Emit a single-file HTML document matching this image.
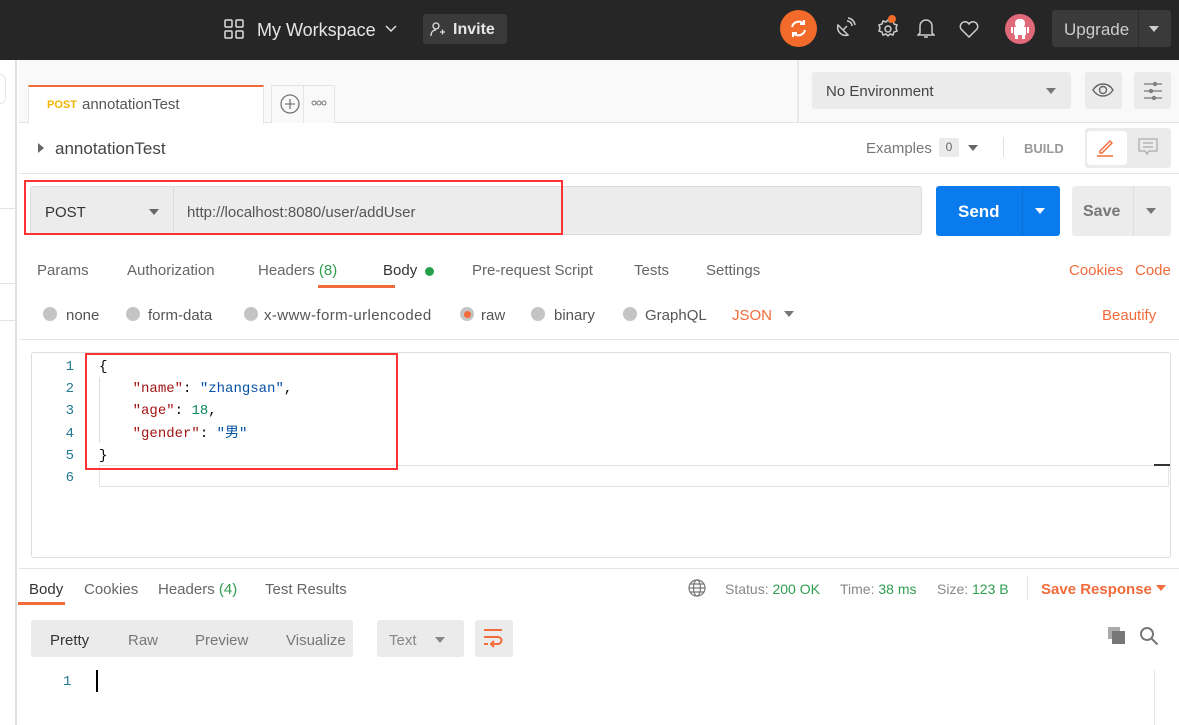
<!DOCTYPE html>
<html><head><meta charset="utf-8"><style>
*{box-sizing:border-box;margin:0;padding:0}
body{width:1179px;height:725px;overflow:hidden;background:#fff;font-family:"Liberation Sans","Noto Sans CJK SC",sans-serif;font-size:15px;color:#505050;position:relative}
.a{position:absolute}
.top{left:0;top:0;width:1179px;height:60px;background:#262626}
.w{color:#e6e6e6}
.btn{background:#3a3a3a;border-radius:3px}
.mono{font-family:"Liberation Mono","Noto Sans CJK SC",monospace;font-size:14px}
.rad{width:14px;height:14px;border-radius:50%;background:#c4c4c4}
.or{color:#f26b3a}
.gr{color:#2e9e4f}
.hl{height:1px;background:#e4e4e4}
</style></head><body>
<div class="a top"></div>
<svg class="a" style="left:224px;top:19px" width="20" height="20" fill="none" stroke="#ddd" stroke-width="1.5"><rect x="1" y="1" width="7" height="7" rx="1"/><rect x="12" y="1" width="7" height="7" rx="1"/><rect x="1" y="12" width="7" height="7" rx="1"/><rect x="12" y="12" width="7" height="7" rx="1"/></svg>
<div class="a w" style="left:257px;top:20px;font-size:18px">My Workspace</div>
<svg class="a" style="left:385px;top:25px" width="12" height="8" fill="none" stroke="#ddd" stroke-width="1.5"><path d="M1 1l5 5 5-5"/></svg>
<div class="a btn" style="left:423px;top:14px;width:84px;height:30px"></div>
<svg class="a" style="left:430px;top:21px" width="16" height="16" fill="none" stroke="#ddd" stroke-width="1.3"><circle cx="6" cy="5" r="3"/><path d="M1 15c0-4 2-6 5-6M10 11h5M12.5 8.5v5"/></svg>
<div class="a w" style="left:453px;top:21px;font-size:16px;font-weight:bold">Invite</div>
<div class="a" style="left:780px;top:10px;width:37px;height:37px;border-radius:50%;background:#f26b2a"></div>
<svg class="a" style="left:788px;top:18px" width="21" height="21" fill="none" stroke="#fff" stroke-width="2"><path d="M4 9a7 7 0 0 1 12-3M17 12a7 7 0 0 1-12 3"/><path d="M16 2v4h-4M5 19v-4h4"/></svg>
<svg class="a" style="left:834px;top:17px" width="22" height="22" fill="none" stroke="#ccc" stroke-width="1.5"><path d="M4 8a8 8 0 0 0 10 10zM9 13l4-4M13 4a5 5 0 0 1 5 5M14 1a8 8 0 0 1 7 7"/></svg>
<svg class="a" style="left:877px;top:17px" width="22" height="22" fill="none" stroke="#ccc" stroke-width="1.5"><circle cx="11" cy="12" r="3"/><path d="M11 3l2 2 3-1 1 3 3 1-1 3 1 3-3 1-1 3-3-1-2 2-2-2-3 1-1-3-3-1 1-3-1-3 3-1 1-3 3 1z"/></svg>
<div class="a" style="left:888px;top:15px;width:8px;height:8px;border-radius:50%;background:#f26b2a"></div>
<svg class="a" style="left:917px;top:17px" width="18" height="22" fill="none" stroke="#ccc" stroke-width="1.5"><path d="M3 16V9a6 6 0 0 1 12 0v7l2 2H1zM7 20h4"/></svg>
<svg class="a" style="left:958px;top:20px" width="22" height="18" fill="none" stroke="#ccc" stroke-width="1.5"><path d="M11 17L3 9a4.5 4.5 0 0 1 8-5 4.5 4.5 0 0 1 8 5z"/></svg>
<div class="a" style="left:1005px;top:14px;width:30px;height:30px;border-radius:50%;background:#e0697a"></div>
<svg class="a" style="left:1011px;top:17px" width="18" height="24" fill="#fff"><rect x="4" y="2" width="10" height="9" rx="4"/><rect x="3" y="10" width="12" height="8"/><rect x="4" y="17" width="3" height="5"/><rect x="11" y="17" width="3" height="5"/><rect x="0" y="10" width="2" height="6"/><rect x="16" y="10" width="2" height="6"/></svg>
<div class="a btn" style="left:1052px;top:10px;width:119px;height:37px"></div>
<div class="a" style="left:1138px;top:10px;width:1px;height:37px;background:#2d2d2d"></div>
<div class="a w" style="left:1064px;top:20px;font-size:17px;color:#ccc">Upgrade</div>
<div class="a" style="left:1149px;top:26px;border:5px solid transparent;border-top:6px solid #ccc"></div>

<div class="a" style="left:0;top:60px;width:17px;height:665px;background:#fff;border-right:2px solid #e0e0e0"></div>
<div class="a" style="left:0;top:74px;width:6px;height:30px;border:1px solid #e6e6e6;border-left:none;border-radius:0 15px 15px 0"></div>
<div class="a hl" style="left:0;top:208px;width:17px"></div>
<div class="a hl" style="left:0;top:283px;width:17px"></div>
<div class="a hl" style="left:0;top:320px;width:17px"></div>

<div class="a" style="left:19px;top:60px;width:1160px;height:63px;background:#f9f9f9;border-bottom:1px solid #e4e4e4"></div>
<div class="a" style="left:28px;top:85px;width:236px;height:39px;background:#fff;border-top:2px solid #f26b3a;border-right:1px solid #e4e4e4;border-left:1px solid #e4e4e4"></div>
<div class="a" style="left:47px;top:99px;font-size:11px;font-weight:bold;color:#f4b400">POST</div>
<div class="a" style="left:82px;top:96px;font-size:15px;color:#555">annotationTest</div>
<div class="a" style="left:286px;top:100px;width:9px;height:9px;border-radius:50%;background:#f26b2a"></div>
<div class="a" style="left:271px;top:85px;width:64px;height:38px;border:1px solid #e4e4e4;border-bottom:none;background:#f9f9f9"></div>
<div class="a" style="left:303px;top:85px;width:1px;height:38px;background:#e4e4e4"></div>
<svg class="a" style="left:279px;top:93px" width="22" height="22" fill="none" stroke="#777" stroke-width="1.3"><circle cx="11" cy="11" r="9"/><path d="M11 6v10M6 11h10"/></svg>
<svg class="a" style="left:311px;top:100px" width="16" height="6" fill="none" stroke="#777" stroke-width="1"><circle cx="3" cy="3" r="2"/><circle cx="8" cy="3" r="2"/><circle cx="13" cy="3" r="2"/></svg>
<div class="a" style="left:797px;top:60px;width:2px;height:63px;background:#e8e8e8"></div>
<div class="a" style="left:812px;top:72px;width:259px;height:37px;background:#ebebeb;border-radius:3px"></div>
<div class="a" style="left:826px;top:83px;font-size:15px;color:#444">No Environment</div>
<div class="a" style="left:1046px;top:88px;border:5px solid transparent;border-top:6px solid #777"></div>
<div class="a" style="left:1085px;top:72px;width:37px;height:37px;background:#ebebeb;border-radius:3px"></div>
<svg class="a" style="left:1092px;top:82px" width="22" height="16" fill="none" stroke="#666" stroke-width="1.4"><path d="M1 8c5-8 15-8 20 0-5 8-15 8-20 0z"/><circle cx="11" cy="8" r="3.5"/></svg>
<div class="a" style="left:1134px;top:72px;width:37px;height:37px;background:#ebebeb;border-radius:3px"></div>
<svg class="a" style="left:1143px;top:81px" width="20" height="20" fill="none" stroke="#777" stroke-width="1.3"><path d="M1 3h18M1 10h18M1 17h18"/><circle cx="12" cy="3" r="1.5"/><circle cx="8" cy="10" r="1.5"/><circle cx="11" cy="17" r="1.5"/></svg>

<svg class="a" style="left:38px;top:143px" width="6" height="10"><path d="M0 0l6 5-6 5z" fill="#666"/></svg>
<div class="a" style="left:55px;top:139px;font-size:17px;color:#444">annotationTest</div>
<div class="a" style="left:866px;top:140px;font-size:15px;color:#777">Examples</div>
<div class="a" style="left:939px;top:138px;width:20px;height:19px;background:#ebebeb;border-radius:2px;font-size:12px;color:#666;text-align:center;line-height:19px">0</div>
<div class="a" style="left:968px;top:145px;border:5px solid transparent;border-top:6px solid #666"></div>
<div class="a" style="left:1003px;top:137px;width:1px;height:20px;background:#e0e0e0"></div>
<div class="a" style="left:1024px;top:141px;font-size:13px;font-weight:bold;color:#999">BUILD</div>
<div class="a" style="left:1085px;top:128px;width:86px;height:40px;background:#ebebeb;border-radius:3px"></div>
<div class="a" style="left:1087px;top:131px;width:40px;height:34px;background:#fff;border-radius:3px"></div>
<svg class="a" style="left:1096px;top:137px" width="20" height="20" fill="none" stroke="#f26b3a" stroke-width="1.4"><path d="M4 14l10-10 2 2-10 10H4zM1 19h16"/></svg>
<svg class="a" style="left:1138px;top:138px" width="20" height="18" fill="none" stroke="#aaa" stroke-width="1.2"><path d="M1 1h18v12H11l-2 3-2-3H1zM5 5h10M5 9h10"/></svg>
<div class="a hl" style="left:19px;top:173px;width:1160px"></div>

<div class="a" style="left:30px;top:186px;width:892px;height:49px;background:#ececec;border:1px solid #dcdcdc;border-radius:3px"></div>
<div class="a" style="left:173px;top:187px;width:1px;height:47px;background:#dcdcdc"></div>
<div class="a" style="left:45px;top:204px;font-size:15px;color:#333">POST</div>
<div class="a" style="left:149px;top:209px;border:5px solid transparent;border-top:6px solid #666"></div>
<div class="a" style="left:187px;top:204px;font-size:15px;color:#555">http://localhost:8080/user/addUser</div>
<div class="a" style="left:24px;top:180px;width:539px;height:55px;border:2px solid #f33"></div>
<div class="a" style="left:936px;top:186px;width:124px;height:50px;background:#097bed;border-radius:3px"></div>
<div class="a" style="left:1022px;top:186px;width:1px;height:50px;background:#0a6fd4"></div>
<div class="a" style="left:958px;top:202px;font-size:17px;font-weight:bold;color:#fff">Send</div>
<div class="a" style="left:1035px;top:208px;border:5px solid transparent;border-top:6px solid #fff"></div>
<div class="a" style="left:1072px;top:186px;width:99px;height:50px;background:#ececec;border-radius:3px"></div>
<div class="a" style="left:1133px;top:186px;width:1px;height:50px;background:#ddd"></div>
<div class="a" style="left:1083px;top:203px;font-size:16px;font-weight:bold;color:#777">Save</div>
<div class="a" style="left:1146px;top:208px;border:5px solid transparent;border-top:6px solid #777"></div>

<div class="a" style="top:262px;left:37px;color:#666">Params</div>
<div class="a" style="top:262px;left:127px;color:#666">Authorization</div>
<div class="a" style="top:262px;left:258px;color:#666">Headers <span class="gr">(8)</span></div>
<div class="a" style="top:262px;left:383px;color:#333">Body</div>
<div class="a" style="left:425px;top:267px;width:9px;height:9px;border-radius:50%;background:#27a04b"></div>
<div class="a" style="left:318px;top:285px;width:77px;height:3px;background:#f26b3a"></div>
<div class="a" style="top:262px;left:472px;color:#666">Pre-request Script</div>
<div class="a" style="top:262px;left:634px;color:#666">Tests</div>
<div class="a" style="top:262px;left:706px;color:#666">Settings</div>
<div class="a or" style="top:262px;left:1069px">Cookies</div>
<div class="a or" style="top:262px;left:1135px">Code</div>

<div class="a rad" style="left:43px;top:307px"></div><div class="a" style="left:66px;top:307px;color:#555">none</div>
<div class="a rad" style="left:126px;top:307px"></div><div class="a" style="left:148px;top:307px;color:#555">form-data</div>
<div class="a rad" style="left:244px;top:307px"></div><div class="a" style="left:264px;top:307px;color:#555;letter-spacing:0.4px">x-www-form-urlencoded</div>
<div class="a rad" style="left:460px;top:307px;background:#c4c4c4"></div><div class="a" style="left:464px;top:311px;width:7px;height:7px;border-radius:50%;background:#f26b3a"></div><div class="a" style="left:481px;top:307px;color:#555">raw</div>
<div class="a rad" style="left:531px;top:307px"></div><div class="a" style="left:554px;top:307px;color:#555">binary</div>
<div class="a rad" style="left:623px;top:307px"></div><div class="a" style="left:645px;top:307px;color:#555">GraphQL</div>
<div class="a or" style="left:732px;top:307px">JSON</div>
<div class="a" style="left:784px;top:311px;border:5px solid transparent;border-top:6px solid #777"></div>
<div class="a or" style="left:1102px;top:307px">Beautify</div>
<div class="a hl" style="left:19px;top:339px;width:1160px"></div>

<div class="a" style="left:31px;top:352px;width:1140px;height:206px;border:1px solid #ddd;border-radius:3px"></div>
<div class="a" style="left:99px;top:465px;width:1070px;height:22px;border:1px solid #e4e4e4"></div>
<div class="a" style="left:1154px;top:464px;width:16px;height:2px;background:#333"></div>
<div class="a" style="left:99px;top:377px;width:1px;height:66px;background:#ddd"></div>
<div class="a mono" style="left:40px;top:356px;width:34px;text-align:right;color:#237893;line-height:22.2px">1<br>2<br>3<br>4<br>5<br>6</div>
<div class="a mono" style="left:99px;top:356px;line-height:22.2px;white-space:pre;color:#000">{
    <span style="color:#a31515">"name"</span>: <span style="color:#0451a5">"zhangsan"</span>,
    <span style="color:#a31515">"age"</span>: <span style="color:#098658">18</span>,
    <span style="color:#a31515">"gender"</span>: <span style="color:#0451a5">"男"</span>
}</div>
<div class="a" style="left:85px;top:353px;width:313px;height:117px;border:2px solid #f33"></div>

<div class="a hl" style="left:19px;top:568px;width:1160px"></div>
<div class="a" style="left:29px;top:581px;color:#333">Body</div>
<div class="a" style="left:18px;top:602px;width:47px;height:3px;background:#f26b3a"></div>
<div class="a" style="left:84px;top:581px;color:#666">Cookies</div>
<div class="a" style="left:158px;top:581px;color:#666">Headers <span class="gr">(4)</span></div>
<div class="a" style="left:265px;top:581px;color:#666">Test Results</div>
<svg class="a" style="left:688px;top:579px" width="18" height="18" fill="none" stroke="#777" stroke-width="1.2"><circle cx="9" cy="9" r="8"/><ellipse cx="9" cy="9" rx="3.5" ry="8"/><path d="M1 9h16M2.5 5h13M2.5 13h13"/></svg>
<div class="a" style="left:725px;top:581px;font-size:14px;color:#888">Status: <span class="gr">200 OK</span></div>
<div class="a" style="left:840px;top:581px;font-size:14px;color:#888">Time: <span class="gr">38 ms</span></div>
<div class="a" style="left:937px;top:581px;font-size:14px;color:#888">Size: <span class="gr">123 B</span></div>
<div class="a" style="left:1027px;top:576px;width:1px;height:24px;background:#e4e4e4"></div>
<div class="a or" style="left:1041px;top:581px;font-weight:bold">Save Response</div>
<div class="a" style="left:1156px;top:585px;border:5px solid transparent;border-top:6px solid #f26b3a"></div>

<div class="a" style="left:31px;top:620px;width:322px;height:37px;background:#ebebeb;border-radius:3px"></div>
<div class="a" style="left:50px;top:632px;color:#333">Pretty</div>
<div class="a" style="left:128px;top:632px;color:#777">Raw</div>
<div class="a" style="left:195px;top:632px;color:#777">Preview</div>
<div class="a" style="left:286px;top:632px;color:#777">Visualize</div>
<div class="a" style="left:377px;top:620px;width:87px;height:37px;background:#ebebeb;border-radius:3px"></div>
<div class="a" style="left:389px;top:632px;color:#888">Text</div>
<div class="a" style="left:435px;top:637px;border:5px solid transparent;border-top:6px solid #888"></div>
<div class="a" style="left:475px;top:620px;width:38px;height:37px;background:#ebebeb;border-radius:3px"></div>
<svg class="a" style="left:483px;top:628px" width="22" height="22" fill="none" stroke="#f26b3a" stroke-width="2"><path d="M1 2h18M1 9h14a3 3 0 0 1 0 7H9M11 13l-3 3 3 3M1 16h4"/></svg>
<svg class="a" style="left:1107px;top:626px" width="20" height="20" fill="#777"><rect x="1" y="1" width="12" height="12" fill="#aaa"/><rect x="5" y="5" width="13" height="13"/></svg>
<svg class="a" style="left:1139px;top:626px" width="20" height="20" fill="none" stroke="#777" stroke-width="2"><circle cx="8" cy="8" r="6"/><path d="M12.5 12.5l6 6"/></svg>
<div class="a mono" style="left:63px;top:674px;color:#237893">1</div>
<div class="a" style="left:96px;top:670px;width:2px;height:22px;background:#000"></div>
<div class="a" style="left:1154px;top:670px;width:1px;height:55px;background:#e4e4e4"></div>
</body></html>
